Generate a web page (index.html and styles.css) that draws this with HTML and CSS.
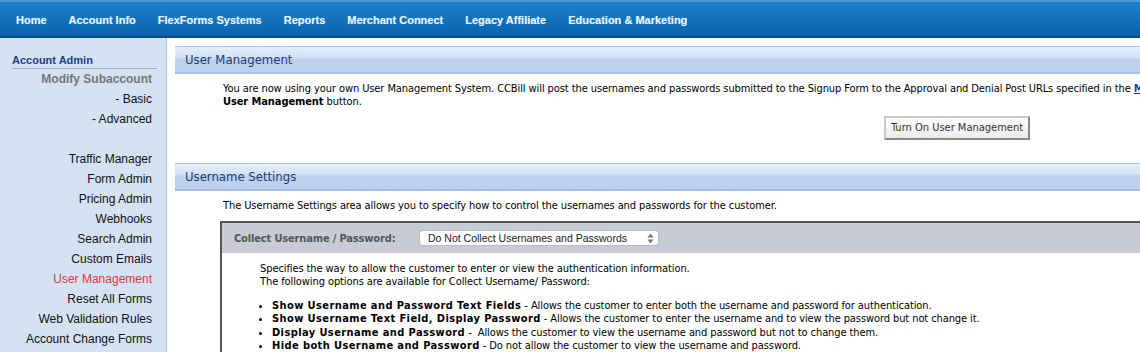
FILE: index.html
```html
<!DOCTYPE html>
<html>
<head>
<meta charset="utf-8">
<title>User Management</title>
<link rel="stylesheet" href="styles.css">
</head>
<body>
<nav class="topnav">
  <a class="nav-item">Home</a>
  <a class="nav-item">Account Info</a>
  <a class="nav-item">FlexForms Systems</a>
  <a class="nav-item">Reports</a>
  <a class="nav-item">Merchant Connect</a>
  <a class="nav-item">Legacy Affiliate</a>
  <a class="nav-item">Education &amp; Marketing</a>
</nav>
<div class="layout">
  <aside class="sidebar">
    <div class="side-title">Account Admin</div>
    <ul class="side-list">
      <li class="side-sub">Modify Subaccount</li>
      <li>- Basic</li>
      <li>- Advanced</li>
      <li class="side-gap"></li>
      <li>Traffic Manager</li>
      <li>Form Admin</li>
      <li>Pricing Admin</li>
      <li>Webhooks</li>
      <li>Search Admin</li>
      <li>Custom Emails</li>
      <li class="side-active">User Management</li>
      <li>Reset All Forms</li>
      <li>Web Validation Rules</li>
      <li>Account Change Forms</li>
    </ul>
  </aside>
  <main class="main">
    <section class="section">
      <h2 class="section-head">User Management</h2>
      <div class="section-body">
        <p class="text">You are now using your own User Management System. CCBill will post the usernames and passwords submitted to the Signup Form to the Approval and Denial Post URLs specified in the <a class="link">Modify Subaccount</a> page. To go back to using CCBill's system, click the Turn Off<br><b>User Management</b> button.</p>
        <div class="btn-row"><button class="btn">Turn On User Management</button></div>
      </div>
    </section>
    <section class="section">
      <h2 class="section-head">Username Settings</h2>
      <div class="section-body">
        <p class="text">The Username Settings area allows you to specify how to control the usernames and passwords for the customer.</p>
        <div class="setting-box">
          <div class="setting-head">
            <span class="setting-label">Collect Username / Password:</span>
            <div class="select">
              <span>Do Not Collect Usernames and Passwords</span>
              <svg class="select-arrows" width="7" height="11" viewBox="0 0 7 11"><path d="M3.5 0.5 L6.5 4.5 L0.5 4.5 Z" fill="#777"/><path d="M3.5 10.5 L6.5 6.5 L0.5 6.5 Z" fill="#777"/></svg>
            </div>
          </div>
          <div class="setting-body">
            <p class="text">Specifies the way to allow the customer to enter or view the authentication information.<br>The following options are available for Collect Username/ Password:</p>
            <ul class="opts">
              <li><b>Show Username and Password Text Fields</b> - Allows the customer to enter both the username and password for authentication.</li>
              <li><b>Show Username Text Field, Display Password</b> - Allows the customer to enter the username and to view the password but not change it.</li>
              <li><b>Display Username and Password</b> -&nbsp; Allows the customer to view the username and password but not to change them.</li>
              <li><b>Hide both Username and Password</b> - Do not allow the customer to view the username and password.</li>
            </ul>
          </div>
        </div>
      </div>
    </section>
  </main>
</div>
</body>
</html>
```

FILE: styles.css
```css
html, body {
  margin: 0;
  padding: 0;
  overflow: hidden;
  background: #fff;
}
body {
  font-family: "Liberation Sans", Arial, sans-serif;
  width: 1140px;
  height: 352px;
}
.topnav {
  height: 33px;
  display: flex;
  align-items: center;
  padding: 1px 0 0 5px;
  box-sizing: content-box;
  border-top: 2px solid #4d9bd9;
  border-bottom: 2px solid #0a4c8a;
  background: linear-gradient(#1c80cb, #0b62ac);
}
.nav-item {
  font-family: "Liberation Sans", Arial, sans-serif;
  font-weight: bold;
  font-size: 11px;
  color: #e9f5ff;
  padding: 0 11px;
  text-shadow: 0 0 1px rgba(160, 210, 255, 0.6);
  white-space: nowrap;
}
.layout {
  display: flex;
  height: 314px;
}
.sidebar {
  flex: 0 0 167px;
  background: #d5e2f4;
  border-right: 1px solid #aac0de;
  padding-top: 15px;
  box-sizing: border-box;
}
.side-title {
  margin: 0 9px 0 12px;
  font-weight: bold;
  font-size: 11px;
  color: #23408c;
  line-height: 14px;
  padding-bottom: 1px;
  border-bottom: 1px solid #a7adb9;
}
.side-list {
  list-style: none;
  margin: 0;
  padding: 0 14px 0 0;
  text-align: right;
  font-size: 12px;
  color: #111;
}
.side-list li {
  height: 20px;
  line-height: 20px;
  white-space: nowrap;
}
.side-sub {
  font-weight: bold;
  color: #777;
}
.side-active {
  color: #f0323c;
}
.main {
  flex: 1;
  padding: 8px 0 0 8px;
  min-width: 0;
}
.section {
  width: 1600px;
}
.section + .section {
  margin-top: 23px;
}
.section-head {
  margin: 0;
  height: 25px;
  line-height: 25px;
  padding-left: 10px;
  font-family: "DejaVu Sans", sans-serif;
  font-stretch: condensed;
  font-weight: normal;
  font-size: 13px;
  color: #203c74;
  border-top: 1px solid #a6c3ea;
  border-bottom: 2px solid #a4c0e8;
  background: linear-gradient(#e6eef9 0%, #d4e2f5 40%, #bdd1ee 50%, #bcd0ed 100%);
}
.section-body {
  padding: 8px 0 0 48px;
}
.text {
  margin: 0;
  font-family: "DejaVu Sans", sans-serif;
  font-stretch: condensed;
  font-size: 11px;
  line-height: 13px;
  letter-spacing: -0.09px;
  color: #000;
  white-space: nowrap;
}
.link {
  color: #1a3fb0;
  font-weight: bold;
  text-decoration: underline;
}
.btn-row {
  padding: 8px 0 0 661px;
  line-height: 0;
}
.btn {
  font-family: "DejaVu Sans", sans-serif;
  font-stretch: condensed;
  font-size: 11px;
  line-height: 14px;
  color: #333;
  height: 24px;
  padding: 0 5px;
  border: 2px solid;
  border-color: #c9c9c9 #888 #888 #c9c9c9;
  background: linear-gradient(#fdfdfd, #ececec);
}
.setting-box {
  margin: 9px 0 0 -3px;
  border: 2px solid #555;
  border-right: none;
}
.setting-head {
  height: 30px;
  background: #c8cbd3;
  display: flex;
  align-items: center;
  padding-left: 12px;
}
.setting-label {
  font-family: "DejaVu Sans", sans-serif;
  font-stretch: condensed;
  font-weight: bold;
  font-size: 11px;
  letter-spacing: -0.15px;
  color: #555;
  width: 185px;
}
.select {
  width: 240px;
  height: 16px;
  box-sizing: border-box;
  background: #fff;
  border-radius: 4px;
  border: 1px solid #b9bcc2;
  display: flex;
  align-items: center;
  justify-content: space-between;
  padding: 0 4px 0 8px;
  font-family: "Liberation Sans", Arial, sans-serif;
  font-size: 10.5px;
  color: #222;
}
.setting-body {
  padding: 9px 0 0 38px;
}
.opts {
  margin: 11px 0 0;
  padding: 0 0 0 12px;
  font-family: "DejaVu Sans", sans-serif;
  font-stretch: condensed;
  font-size: 11px;
  line-height: 13.4px;
  letter-spacing: -0.09px;
  white-space: nowrap;
}
.opts b {
  letter-spacing: 0.4px;
}
```
